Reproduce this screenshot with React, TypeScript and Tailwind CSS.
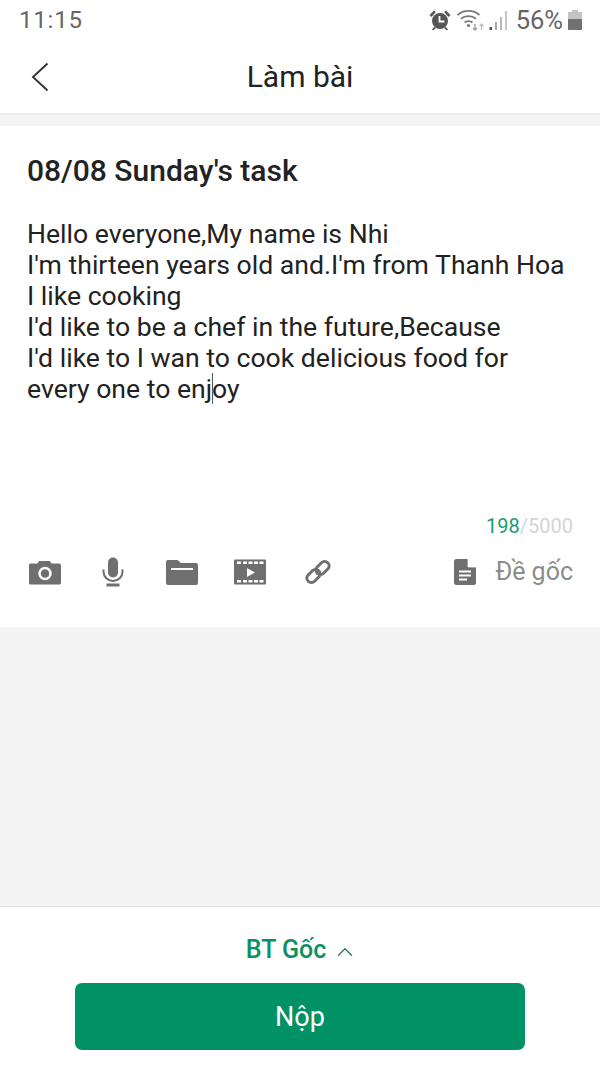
import { ChevronUp } from "lucide-react";

const LINES = [
  "Hello everyone,My name is Nhi",
  "I'm thirteen years old and.I'm from Thanh Hoa",
  "I like cooking",
  "I'd like to be a chef in the future,Because",
  "I'd like to I wan to cook delicious food for",
];

function StatusIcons() {
  return (
    <div className="flex items-center">
      <svg width="22" height="22" viewBox="0 0 22 22" className="text-[#555]" fill="currentColor">
        <circle cx="11" cy="12" r="8" />
        <path d="M0.500 6 5 1.500l1.800 1.500L2.500 8zM21.500 6 17 1.500 15.200 3l4.300 5zM5 18l-2 2.500 1.200 1L7 19zM17 18l2 2.500-1.200 1L15 19z" />
        <path d="M10.500 7v5.500h5" fill="none" stroke="#fff" strokeWidth="1.800" />
      </svg>
      <svg width="28" height="22" viewBox="0 0 28 22" className="ml-[6px] text-[#777]" fill="none" stroke="currentColor">
        <path d="M0.500 6c6-5.500 16-5.500 22 0" strokeWidth="1.800" />
        <path d="M4 9.800c4-3.500 11-3.500 15 0" strokeWidth="1.800" />
        <path d="M7.500 13.500c2.200-1.800 5.800-1.800 8 0" strokeWidth="1.800" />
        <circle cx="11.500" cy="16.500" r="1.600" fill="currentColor" stroke="none" />
        <path d="M18 15v6M16 19l2 2 2-2" strokeWidth="1.200" opacity="0.8" />
        <path d="M24.500 21v-6M22.500 17l2-2 2 2" strokeWidth="1.200" opacity="0.5" />
      </svg>
      <svg width="20" height="22" viewBox="0 0 20 22" className="ml-[4px]">
        <rect x="0.500" y="18" width="2.500" height="3" fill="#555" />
        <rect x="6" y="13" width="2" height="8" fill="#a8a8a8" />
        <rect x="11" y="8" width="2" height="13" fill="#b8b8b8" />
        <rect x="16" y="2" width="2" height="19" fill="#c4c4c4" />
      </svg>
      <span className="ml-[7px] mt-[2px] text-[25.500px] leading-none text-[#666]">56%</span>
      <svg width="14" height="22" viewBox="0 0 14 22" className="ml-[5px]">
        <rect x="4" y="1" width="6" height="3" fill="#c4c4c4" />
        <rect x="0" y="3" width="14" height="8" fill="#c4c4c4" />
        <rect x="0" y="10" width="14" height="11" fill="#717171" />
      </svg>
    </div>
  );
}

function ToolIcons() {
  return (
    <div className="ml-[1px] flex items-center text-[#6f6f6f]">
      <svg width="34" height="26" viewBox="0 0 34 26" fill="currentColor">
        <path d="M2 4.500h7.500L11 2h11l1.500 2.500H31a2 2 0 0 1 2 2V24a1.500 1.500 0 0 1-1.500 1.500h-29A1.500 1.500 0 0 1 1 24V6.500a2 2 0 0 1 1-2z" />
        <circle cx="17" cy="14.500" r="5.500" fill="none" stroke="#fff" strokeWidth="2.500" />
      </svg>
      <svg width="22" height="30" viewBox="0 0 22 30" className="ml-[40px]" fill="currentColor">
        <rect x="6" y="0.500" width="10" height="20" rx="5" />
        <path d="M1.500 12.500v2a9.500 9.500 0 0 0 19 0v-2" fill="none" stroke="currentColor" strokeWidth="2" />
        <rect x="4.500" y="26.500" width="13" height="3" />
      </svg>
      <svg width="32" height="26" viewBox="0 0 32 26" className="ml-[42px]" fill="currentColor">
        <path d="M2 1h9.500l3.500 3h15a2 2 0 0 1 2 2v18a2 2 0 0 1-2 2H2a2 2 0 0 1-2-2V3a2 2 0 0 1 2-2z" />
        <rect x="5" y="9" width="22" height="2" fill="#fff" />
      </svg>
      <svg width="32" height="26" viewBox="0 0 32 26" className="ml-[36px]" fill="currentColor">
        <rect x="0" y="0.500" width="32" height="25" rx="1" />
        <path d="M3 2.500h4v2.500H3zM9 2.500h4v2.500H9zM14.500 2.500h4v2.500h-4zM20 2.500h4v2.500h-4zM25.500 2.500h4v2.500h-4zM3 21h4v2.500H3zM9 21h4v2.500H9zM14.500 21h4v2.500h-4zM20 21h4v2.500h-4zM25.500 21h4v2.500h-4z" fill="#fff" />
        <path d="M13 9l8 4.500-8 4.500z" fill="#fff" />
      </svg>
      <svg width="26" height="26" viewBox="0 0 26 26" className="ml-[39px]" fill="none" stroke="currentColor" strokeWidth="3">
        <rect x="1" y="12.500" width="15" height="9" rx="4.500" transform="rotate(-45 8.500 17)" />
        <rect x="10" y="4.500" width="15" height="9" rx="4.500" transform="rotate(-45 17.500 9)" />
      </svg>
    </div>
  );
}

export default function App() {
  return (
    <div className="flex h-[1067px] w-[600px] flex-col overflow-hidden bg-white font-['Roboto',sans-serif]">
      <div className="flex h-[40px] items-center justify-between pl-[19px] pr-[18px] text-[#666]">
        <span className="text-[24px] tracking-[0.8px]">11:15</span>
        <StatusIcons />
      </div>

      <div className="relative flex h-[75px] items-center justify-center border-b-2 border-[#ebebeb] pb-[2px]">
        <svg width="18" height="30" viewBox="0 0 18 30" className="absolute left-[31px] top-[22px] text-[#333]" fill="none" stroke="currentColor" strokeWidth="1.900">
          <path d="M16.500 1.500 2 15l14.500 13.500" />
        </svg>
        <h1 className="mt-[1px] text-[30px] text-[#222]">Làm bài</h1>
      </div>

      <div className="h-[11px] bg-[#f4f4f4]" />

      <div className="flex h-[501px] flex-col bg-white px-[27px]">
        <h2 className="mt-[25px] text-[30px] leading-[40px] font-medium text-[#222]">08/08 Sunday's task</h2>
        <div className="mt-[27px] text-[26.600px] leading-[31px] text-[#222]">
          {LINES.map((line) => (
            <div key={line}>{line}</div>
          ))}
          <div>
            every one to enj<span className="mx-[-0.5px] border-l border-[#555]" />oy
          </div>
        </div>
        <div className="mt-[110px] text-right text-[20px] leading-[24px] text-[#d4d4d4]">
          <span className="text-[#1e9a70]">198</span>/5000
        </div>
        <div className="mt-[19px] flex items-center justify-between">
          <ToolIcons />
          <div className="flex items-center">
            <svg width="22" height="26" viewBox="0 0 22 26" className="text-[#6f6f6f]" fill="currentColor">
              <path d="M2.500 0H14l8 8v15.500a2.500 2.500 0 0 1-2.500 2.500h-17A2.500 2.500 0 0 1 0 23.500v-21A2.500 2.500 0 0 1 2.500 0z" />
              <path d="M14 0v8h8z" fill="#fff" stroke="#fff" strokeWidth="0.800" />
              <path d="M5 12.500h12M5 16.500h12M5 20.500h8" stroke="#fff" strokeWidth="1.800" />
            </svg>
            <span className="ml-[19px] text-[25px] leading-[30px] text-[#8c8c8c]">Đề gốc</span>
          </div>
        </div>
      </div>

      <div className="flex-1 bg-[#f4f4f4]" />

      <div className="flex h-[161px] flex-col items-center border-t border-[#dedede] bg-white">
        <div className="mt-[27px] flex h-[32px] items-center pl-[4px]">
          <span className="text-[25px] font-medium text-[#0b8f63]">BT Gốc</span>
          <ChevronUp size={26} strokeWidth={1.4} className="ml-[6px] mt-[3px] text-[#3c7d66]" />
        </div>
        <button className="mt-[17px] flex h-[67px] w-[450px] items-center justify-center rounded-[7px] bg-[#009264] pt-[1px] text-[27px] text-white">
          Nộp
        </button>
      </div>
    </div>
  );
}
